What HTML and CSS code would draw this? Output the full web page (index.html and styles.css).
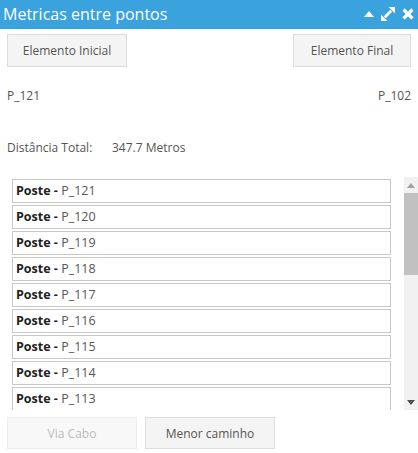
FILE: index.html
```html
<!DOCTYPE html>
<html lang="pt">
<head>
<meta charset="utf-8">
<title>Metricas entre pontos</title>
<link rel="stylesheet" href="styles.css">
</head>
<body>
<div class="panel">
  <div class="header">
    <span class="title">Metricas entre pontos</span>
    <div class="tools">
      <svg class="ic" width="10" height="6" viewBox="0 0 10 6"><polygon points="0,6 5,0 10,6" fill="#fff"/></svg>
      <svg class="ic" width="14" height="14" viewBox="0 0 14 14"><g fill="#fff"><polygon points="7.5,0 14,0 14,6.5"/><polygon points="0,7.5 0,14 6.5,14"/><rect x="5.6" y="2.5" width="2.8" height="9" transform="rotate(45 7 7)"/></g></svg>
      <svg class="ic" width="12" height="12" viewBox="0 0 12 12"><g stroke="#fff" stroke-width="3.2"><line x1="1.5" y1="1.5" x2="10.5" y2="10.5"/><line x1="10.5" y1="1.5" x2="1.5" y2="10.5"/></g></svg>
    </div>
  </div>
  <div class="top-buttons">
    <button class="btn btn-el">Elemento Inicial</button>
    <button class="btn btn-el btn-final">Elemento Final</button>
  </div>
  <div class="points">
    <span>P_121</span>
    <span>P_102</span>
  </div>
  <div class="distance">
    <span class="dist-label">Distância Total:</span>
    <span>347.7 Metros</span>
  </div>
  <div class="list-wrap">
    <div class="list">
      <div class="item"><b>Poste - </b>P_121</div>
      <div class="item"><b>Poste - </b>P_120</div>
      <div class="item"><b>Poste - </b>P_119</div>
      <div class="item"><b>Poste - </b>P_118</div>
      <div class="item"><b>Poste - </b>P_117</div>
      <div class="item"><b>Poste - </b>P_116</div>
      <div class="item"><b>Poste - </b>P_115</div>
      <div class="item"><b>Poste - </b>P_114</div>
      <div class="item"><b>Poste - </b>P_113</div>
      <div class="item"><b>Poste - </b>P_112</div>
      <div class="item"><b>Poste - </b>P_111</div>
      <div class="item"><b>Poste - </b>P_110</div>
      <div class="item"><b>Poste - </b>P_109</div>
      <div class="item"><b>Poste - </b>P_108</div>
      <div class="item"><b>Poste - </b>P_107</div>
      <div class="item"><b>Poste - </b>P_106</div>
      <div class="item"><b>Poste - </b>P_105</div>
      <div class="item"><b>Poste - </b>P_104</div>
      <div class="item"><b>Poste - </b>P_103</div>
      <div class="item"><b>Poste - </b>P_102</div>
    </div>
    <div class="scrollbar">
      <div class="sb-btn"><svg width="8" height="5" viewBox="0 0 8 5"><polygon points="0,5 4,0 8,5" fill="#a3a3a3"/></svg></div>
      <div class="sb-track"><div class="sb-thumb"></div></div>
      <div class="sb-btn"><svg width="8" height="5" viewBox="0 0 8 5"><polygon points="0,0 8,0 4,5" fill="#505050"/></svg></div>
    </div>
  </div>
  <div class="bottom-buttons">
    <button class="btn btn-bottom" disabled>Via Cabo</button>
    <button class="btn btn-bottom">Menor caminho</button>
  </div>
</div>
</body>
</html>
```
FILE: styles.css
```css
html, body {
  margin: 0;
  padding: 0;
  background: #fff;
}
body {
  font-family: "Open Sans", "Noto Sans", sans-serif;
  font-size: 12px;
  color: #555;
}
.panel {
  width: 418px;
  height: 453px;
  overflow: hidden;
}
.header {
  height: 29px;
  background: #3aa2dd;
  display: flex;
  align-items: center;
  justify-content: space-between;
  padding: 0 4px 0 3px;
}
.title {
  color: #fff;
  font-size: 16px;
  line-height: 29px;
}
.tools {
  display: flex;
  align-items: center;
  gap: 7px;
  padding-bottom: 1px;
}
.ic { display: block; }
.top-buttons {
  display: flex;
  justify-content: space-between;
  padding: 5px 7px 0 7px;
}
.btn {
  font-family: "Open Sans", "Noto Sans", sans-serif;
  font-size: 12px;
  color: #555;
  background: #f4f4f4;
  border: 1px solid #dcdcdc;
  border-radius: 0;
  height: 33px;
  padding: 0;
  margin: 0;
}
.btn-el { width: 120px; }
.btn-final { width: 118px; }
.points {
  display: flex;
  justify-content: space-between;
  padding: 0 7px;
  margin-top: 20px;
  line-height: 18px;
}
.distance {
  display: flex;
  padding: 0 7px;
  margin-top: 34px;
  line-height: 18px;
}
.dist-label { width: 105px; }
.list-wrap {
  display: flex;
  margin-top: 20px;
  height: 233px;
}
.list {
  flex: 1;
  overflow: hidden;
  padding: 2px 0 0 12px;
}
.scrollbar {
  width: 14px;
  display: flex;
  flex-direction: column;
  background: #f1f1f1;
}
.sb-btn {
  height: 16px;
  display: flex;
  align-items: center;
  justify-content: center;
}
.sb-track {
  flex: 1;
}
.sb-thumb {
  height: 82px;
  background: #c1c1c1;
}
.item {
  width: 379px;
  box-sizing: border-box;
  height: 24px;
  line-height: 22px;
  border: 1px solid #c8c8c8;
  padding-left: 3px;
  margin-bottom: 2px;
  font-size: 12.5px;
  color: #555;
}
.item b {
  color: #222;
  font-weight: 700;
}
.bottom-buttons {
  display: flex;
  gap: 8px;
  padding: 7px 7px 0 7px;
}
.btn-bottom { width: 130px; height: 32px; }
.btn-bottom[disabled] {
  color: #bbb;
  background: #f8f8f8;
  border-color: #ececec;
}
```
